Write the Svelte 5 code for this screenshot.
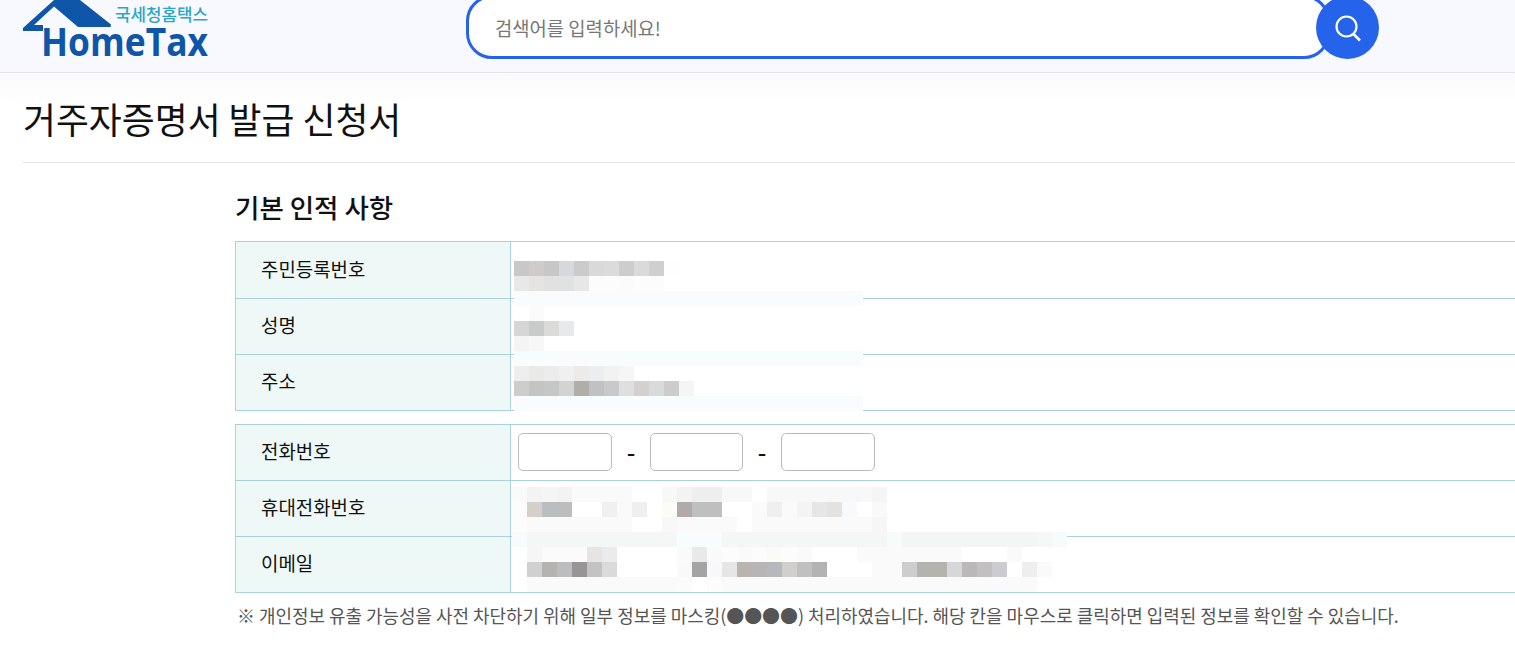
<script>
  // blurred-out personal data, one row of 15px mosaic blocks per entry
  const mosaic = [
    { x: 514, y: 261, c: 'c8c8c8 cfcbc9 c6c7c9 d5d8dc cbcbcb d9d9d7 dbdbdb cdcdcd dadada cfcfcf fefefe' },
    { x: 514, y: 276, c: 'e8e8e8 e5e4e2 e1e1e1 e0e1e3 e7e7e7 fcfcfc fcfcfc fbfbfb fcfcfc fcfcfc' },
    { x: 514, y: 306, c: 'ffffff fbfbfb' },
    { x: 514, y: 321, c: 'd6d6d6 c9cbca dbdbd9 e8e9eb' },
    { x: 514, y: 336, c: 'f4f4f4 f6f7f6' },
    { x: 514, y: 366, c: 'eeeeee e9e9e8 ececec f0f0f2 edebe9 ecedef f1f2f2 f6f6f6' },
    { x: 514, y: 381, c: 'cfcdcb c4c4c4 c5c7c6 d2d4d3 b0aeaa bfc1c5 c9c9c9 dedfe1 d4d0cf d9dadc cccccc f5f5f7' },
    { x: 512, y: 487, c: 'fafafa f3f3f3 f5f5f5 f3f3f3 fafafa fafafa fafafa fafafa ffffff ffffff f8f8f8 f3f3f3 eeeeee eeeeee f8f8f8 f8f8f8 ffffff f8f8f8 f8f8f8 f8f8f8 f8f8f8 f8f8f8 f8f8f8 f8f8f8 f5f5f5' },
    { x: 512, y: 502, c: 'fcfcfc d4cfcb b9bfc0 bbbdbe ffffff ffffff f0f0f0 fafafa efefef ffffff fbfbf8 aeaba9 bec0bf bec0bf ffffff ffffff fafafa efefef fafafa f5f4f2 e5e6e8 e3e2e0 f8f9fb ffffff f9f9f9' },
    { x: 512, y: 517, c: 'fcfcfc fafafa fafafa fafafa fafafa fafafa fafafa fafafa ffffff ffffff f8f8f8 fafafa fafafa fafafa fafafa ffffff fafafa fafafa fafafa fafafa fafafa fafafa fafafa fafafa f6f6f6' },
    { x: 512, y: 532, c: 'f8fbfc f4f7f6 f4f7f6 f4f7f6 f4f7f6 f4f7f6 f4f7f6 f4f7f6 f4f7f6 f4f7f6 f4f7f6 f8fcfc f8fcfc f8fcfc f4f7f6 f4f7f6 f4f7f6 f4f7f6 f4f7f6 f4f7f6 f4f7f6 f4f7f6 f4f7f6 f4f7f6 f4f7f6 f8fbfc f4f6f5 f4f6f5 f4f6f5 f4f6f5 f4f6f5 f4f6f5 f4f6f5 f4f6f5 f4f6f5 f6f8f8 f8fbfc' },
    { x: 527, y: 547, c: 'f6f6f6 fbfbfb fbfbfb fbfbfb e7e5e3 eaebed ffffff ffffff ffffff ffffff fafafa e9e9e9 fafafa fcfcfc fafafa fcfcfc fafaf8 fcfcfa fafafa ffffff ffffff ffffff fafafa fafafa fafafa fafafa fafafa fafafa fafafa ffffff ffffff ffffff fafafa' },
    { x: 527, y: 562, c: 'd0d0d0 b5b3b0 bcbdbf 979595 c3c3c3 dadadc ffffff ffffff ffffff ffffff faf9f7 a4a4a4 f7f8fa e6e6e6 b9b4b0 b7b5b5 b6b9bc d0cfcc bfc1c0 b3b3b1 ffffff ffffff ffffff fafafa fafafa cdcdcd b5b3b0 b5b3b0 d6d7d9 bcb8b8 c2c0c0 cccbd0 ffffff eeeeee fafafa' },
    { x: 527, y: 577, c: 'fafafa fafafa fafafa fafafa fafafa fafafa fafafa fafafa fafafa fafafa fbfbfb ffffff fcfcfc fafafa fafafa fafafa fafafa fafafa fafafa fafafa fafafa fafafa fafafa fafafa fafafa fafafa fafafa fafafa fafafa fafafa fafafa fafafa fafafa fafafa' }
  ];

  const blocks = mosaic.flatMap((row) =>
    row.c.split(' ').map((c, i) => ({ x: row.x + i * 15, y: row.y, fill: '#' + c }))
  );

  const bands = [
    { y: 291, fill: '#f8fcfc' },
    { y: 351, fill: '#f9fcfc' },
    { y: 396, fill: '#f8fcfd' }
  ];

  const identity = [
    { label: '주민등록번호' },
    { label: '성명' },
    { label: '주소' }
  ];
</script>

<div class="page">
  <header class="topbar">
    <svg class="logo" width="200" height="72" viewBox="0 0 200 72" aria-label="HomeTax">
      <path fill="#0f56a8" d="M0 28 L31 0 L57 0 L88 24.500 L87.500 27 L55 27 L31 6.500 L11 25 L20 25 L20 31 L0 31 Z" />
      <text class="logo-ko" x="92" y="20.500" textLength="93" lengthAdjust="spacingAndGlyphs">국세청홈택스</text>
      <text class="logo-en" x="18" y="56" textLength="167" lengthAdjust="spacingAndGlyphs">HomeTax</text>
    </svg>
    <div class="search">
      <div class="search-box">검색어를 입력하세요!</div>
      <button class="search-btn" aria-label="검색">
        <svg width="30" height="30" viewBox="0 0 30 30" fill="none" stroke="#fff" stroke-width="2.200">
          <circle cx="13.500" cy="13.500" r="10" />
          <path d="M20.500 21 L27 27.500" stroke-width="2.600" />
        </svg>
      </button>
    </div>
  </header>

  <div class="title-wrap">
    <h1>거주자증명서 발급 신청서</h1>
  </div>

  <main class="content">
    <h2>기본 인적 사항</h2>

    <div class="info-table first">
      {#each identity as row}
        <div class="row">
          <div class="label">{row.label}</div>
          <div class="value"></div>
        </div>
      {/each}
    </div>

    <div class="info-table second">
      <div class="row">
        <div class="label">전화번호</div>
        <div class="value phone">
          <input type="text" />
          <span class="dash">-</span>
          <input class="mid" type="text" />
          <span class="dash">-</span>
          <input type="text" />
        </div>
      </div>
      <div class="row">
        <div class="label">휴대전화번호</div>
        <div class="value"></div>
      </div>
      <div class="row">
        <div class="label">이메일</div>
        <div class="value"></div>
      </div>
    </div>

    <p class="note">※ 개인정보 유출 가능성을 사전 차단하기 위해 일부 정보를 마스킹(●●●●) 처리하였습니다. 해당 칸을 마우스로 클릭하면 입력된 정보를 확인할 수 있습니다.</p>
  </main>

  <svg class="mosaic" width="1515" height="650" shape-rendering="crispEdges" aria-hidden="true">
    {#each bands as band}
      <rect x="514" y={band.y} width="349" height="15" fill={band.fill} />
    {/each}
    {#each blocks as b}
      <rect x={b.x} y={b.y} width="15" height="15" fill={b.fill} />
    {/each}
  </svg>
</div>

<style>
  :global(body) {
    margin: 0;
    background: #fff;
    font-family: "Noto Sans CJK KR", "Noto Sans", sans-serif;
    color: #111;
  }

  .page {
    position: relative;
    width: 1515px;
    height: 650px;
    overflow: hidden;
  }

  .topbar {
    display: flex;
    height: 72px;
    padding-left: 23px;
    background: #f8f9ff;
    border-bottom: 1px solid #e2e4e8;
    overflow: hidden;
  }

  .logo {
    flex: none;
    display: block;
  }

  .logo-ko {
    font-family: "Noto Sans CJK KR", sans-serif;
    font-size: 17px;
    font-weight: 500;
    fill: #2ba6c6;
  }

  .logo-en {
    font-family: "Open Sans", sans-serif;
    font-weight: 700;
    font-size: 39px;
    fill: #0f56a8;
  }

  .search {
    display: flex;
    align-items: flex-start;
    margin-left: 243px;
  }

  .search-box {
    box-sizing: border-box;
    width: 864px;
    height: 64px;
    margin-top: -5px;
    padding: 1px 0 0 26px;
    display: flex;
    align-items: center;
    background: #fff;
    border: 3px solid #2563eb;
    border-radius: 26px;
    font-size: 18.800px;
    color: #777;
  }

  .search-btn {
    flex: none;
    width: 63px;
    height: 63px;
    margin: -4px 0 0 -14px;
    padding: 0;
    display: flex;
    align-items: center;
    justify-content: center;
    background: #2563eb;
    border: none;
    border-radius: 50%;
    position: relative;
  }

  .title-wrap {
    padding-left: 23px;
    background: linear-gradient(#fafafa, #fff 30px);
  }

  h1 {
    margin: 0;
    height: 89px;
    line-height: 90px;
    font-size: 35.800px;
    font-weight: 400;
    border-bottom: 1px solid #e5e5e5;
  }

  .content {
    padding-left: 235px;
  }

  h2 {
    margin: 0;
    height: 78px;
    line-height: 88px;
    font-size: 26.500px;
    font-weight: 500;
  }

  .info-table {
    width: 1300px;
    border-top: 1px solid #a9d3d6;
    border-left: 1px solid #a9d3d6;
  }

  .second {
    margin-top: 13px;
  }

  .row {
    display: grid;
    grid-template-columns: 275px 1fr;
    height: 56px;
    border-bottom: 1px solid #a9d3d6;
    box-sizing: border-box;
  }

  .first .row:first-child {
    height: 57px;
  }

  .label {
    display: flex;
    align-items: center;
    padding: 0 0 4px 25px;
    background: #eef8f6;
    border-right: 1px solid #a9d3d6;
    font-size: 18.900px;
  }

  .phone {
    display: flex;
    align-items: center;
    padding: 0 0 2px 7px;
  }

  input {
    box-sizing: border-box;
    width: 94px;
    height: 38px;
    margin: 0;
    border: 1px solid #bbb;
    border-radius: 5px;
    background: #fff;
  }

  input.mid {
    width: 93px;
  }

  .dash {
    width: 38px;
    text-align: center;
    font-size: 24px;
    font-weight: 500;
    line-height: 1;
  }

  .note {
    margin: 9px 0 0 2px;
    font-size: 17.950px;
    color: #555;
    white-space: nowrap;
  }

  .mosaic {
    position: absolute;
    left: 0;
    top: 0;
    pointer-events: none;
  }
</style>
